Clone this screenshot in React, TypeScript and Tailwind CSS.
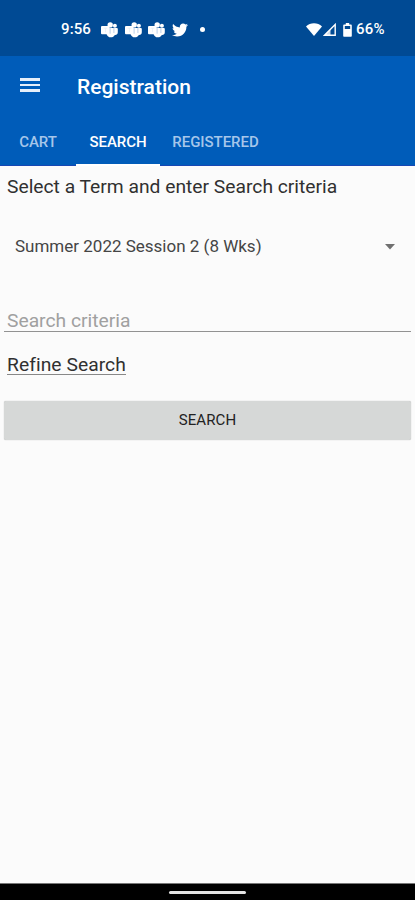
import React, { useState } from "react";
import { FaTwitter } from "react-icons/fa";

const tabs = [
  { label: "CART", width: "w-[76px]" },
  { label: "SEARCH", width: "w-[84px]" },
  { label: "REGISTERED", width: "w-[111px]" },
];

const TeamsIcon = () => (
  <svg className="h-4 w-[17px]" viewBox="0 0 17 16" fill="#fff">
    <circle cx="9.2" cy="2.900" r="2.700" />
    <circle cx="13.900" cy="3.800" r="2" />
    <path d="M5.500 6h10.400c.5 0 .9.3.9.8v3.400c0 1.900-1.300 2.900-3 2.700-.8 1.500-2.200 2.400-3.900 2.400-2.100 0-4.400-1.500-4.400-3.900z" />
    <path d="M1 4h7.600v8.200H1a1 1 0 0 1-1-1V5a1 1 0 0 1 1-1z" />
    <path d="M2.700 6.200h3.600M4.500 6.200v4" stroke="#e3ecf6" strokeWidth="0.7" fill="none" />
    <path d="M9.100 5.500v6.200M12.900 6v5" stroke="#9dbbe0" strokeWidth="0.7" fill="none" />
  </svg>
);

const StatusBar = () => (
  <div className="flex h-14 shrink-0 items-center bg-[#004a94] pr-[29px] pl-[61px] pt-[3px] text-white">
    <span className="w-[40px] text-[15px] font-medium tracking-[0.1px] whitespace-nowrap">
      9:56
    </span>
    <div className="flex items-center gap-[6.500px]">
      <TeamsIcon />
      <TeamsIcon />
      <TeamsIcon />
      <FaTwitter size={16} />
    </div>
    <span className="ml-[12px] h-[5px] w-[5px] rounded-full bg-white" />
    <div className="ml-auto flex items-center">
      <svg className="h-[13px] w-4" viewBox="0 0 16 13" fill="#fff">
        <path d="M8 13 0 3.400C2.200 1.300 4.900.3 8 .3s5.800 1 8 3.100z" />
      </svg>
      <svg className="ml-px h-[13px] w-[13px]" viewBox="0 0 13 13">
        <path d="M1.500 12.300 12.200 1.500v10.800z" fill="none" stroke="#fff" strokeWidth="1.400" />
        <path d="M1 12.500 7.500 6v6.500z" fill="#fff" fillOpacity="0.800" />
      </svg>
      <svg className="ml-[7px] h-[14px] w-[9px]" viewBox="0 0 9 14">
        <path
          fill="#fff"
          fillRule="evenodd"
          d="M2.800 0h3.400v1.400h1.500c.7 0 1.100.4 1.100 1.100v10.200c0 .7-.4 1.100-1.100 1.100H1.300c-.7 0-1.100-.4-1.100-1.100V2.500c0-.7.4-1.100 1.100-1.100h1.500zM1.800 3v3h5.400V3z"
        />
      </svg>
      <span className="ml-1 w-[30px] text-[15px] font-medium tracking-[0.2px] whitespace-nowrap">
        66%
      </span>
    </div>
  </div>
);

const App = () => {
  const [active, setActive] = useState("SEARCH");
  const [criteria, setCriteria] = useState("");

  return (
    <div className="flex h-[900px] w-[415px] flex-col overflow-hidden bg-[#fbfbfb] font-['Roboto','Liberation_Sans',sans-serif]">
      <StatusBar />
      <header className="flex h-[110px] shrink-0 flex-col justify-between border-b border-[#1747b4] bg-[#005cb9]">
        <div className="flex h-[60px] items-center pl-5 text-white">
          <button className="mb-[2px] flex w-[57px] flex-col gap-[3px]" aria-label="Menu">
            <span className="h-[2.500px] w-5 bg-[#e6effa]" />
            <span className="h-[2.500px] w-5 bg-[#e6effa]" />
            <span className="h-[2.500px] w-5 bg-[#e6effa]" />
          </button>
          <h1 className="pt-[4px] text-[21px] font-medium">Registration</h1>
        </div>
        <nav className="-mb-px flex h-12">
          {tabs.map((tab) => (
            <button
              key={tab.label}
              onClick={() => setActive(tab.label)}
              className={`${tab.width} border-b-2 pt-[2px] text-center text-[15px] font-medium tracking-[-0.05px] ${
                active === tab.label
                  ? "border-white text-white"
                  : "border-transparent text-[#a6c6ea]"
              }`}
            >
              {tab.label}
            </button>
          ))}
        </nav>
      </header>
      <main className="flex grow flex-col px-1">
        <p className="mt-[9px] pl-[3px] text-[19.250px] leading-6 whitespace-nowrap text-[#303030]">
          Select a Term and enter Search criteria
        </p>
        <button className="mt-[36px] flex h-6 items-center justify-between pr-4 pl-[11px] text-[17px] text-[#454545]">
          Summer 2022 Session 2 (8 Wks)
          <svg className="h-[6px] w-[10px]" viewBox="0 0 10 6" fill="#707070">
            <path d="M0 0h10L5 5.500z" />
          </svg>
        </button>
        <input
          className="mt-[49px] h-[24px] border-b border-[#929292] bg-transparent pt-[3px] pl-[3px] text-[19.250px] text-[#303030] outline-none placeholder:text-[#a0a0a0]"
          placeholder="Search criteria"
          value={criteria}
          onChange={(e) => setCriteria(e.target.value)}
        />
        <a className="mt-[22px] ml-[3px] h-[21px] w-fit border-b border-[#888] text-[19.250px] leading-[22px] tracking-[0.05px] text-[#303030]">
          Refine Search
        </a>
        <button className="mt-[26px] h-[39px] rounded-[2px] bg-[#d6d8d7] text-[15px] tracking-[0.1px] text-[#222] shadow-[0_0_1px_#aaa]">
          SEARCH
        </button>
      </main>
      <footer className="flex h-[17px] shrink-0 items-center justify-center border-t border-[#777] bg-black">
        <span className="h-[3px] w-[77px] rounded-full bg-[#e4e4e4]" />
      </footer>
    </div>
  );
};

export default App;
